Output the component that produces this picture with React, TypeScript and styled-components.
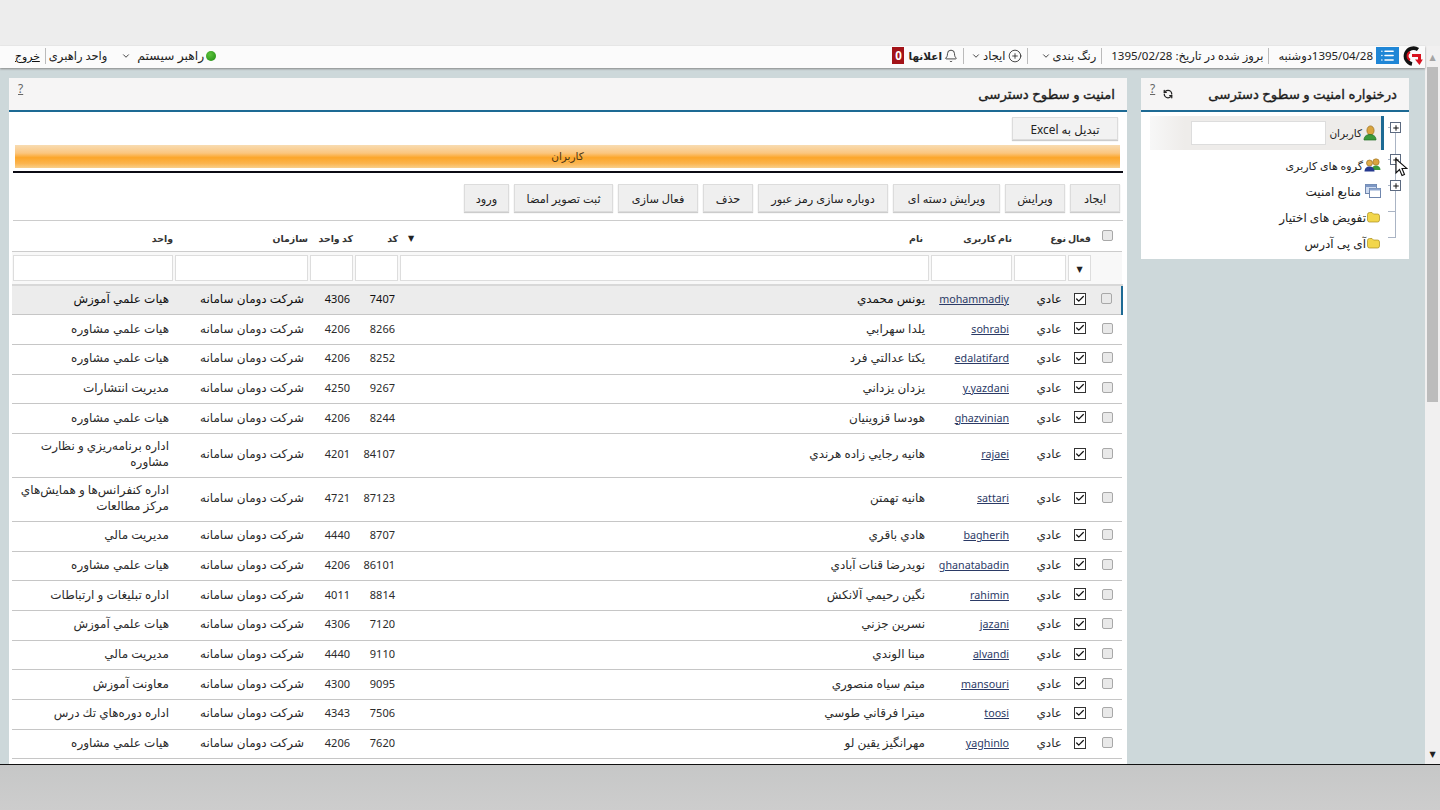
import React from 'react';
import styled, { createGlobalStyle } from 'styled-components';
import { Bell, Check, ChevronDown, CirclePlus, List, Plus, RefreshCcw } from 'lucide-react';

const GlobalStyle = createGlobalStyle`
    html, body {
        margin: 0;
        padding: 0;
        height: 100%;
        overflow: hidden;
    }
    body {
        font-family: 'Noto Sans', 'DejaVu Sans', sans-serif;
        font-size: 11px;
        color: #222;
    }
`;

const Page = styled.div`
    width: 1440px;
    height: 810px;
    display: flex;
    flex-direction: column;
    overflow: hidden;
    position: relative;
`;

const TopChrome = styled.div`
    height: 46px;
    flex: none;
    background: #ededed;
`;

const BottomChrome = styled.div`
    flex: 1;
    background: linear-gradient(#c6c7c7, #cdcdcd);
    border-top: 1px solid #111;
`;

const Browser = styled.div`
    height: 718px;
    flex: none;
    display: flex;
    background: #cdd8da;
`;

const Main = styled.div`
    width: 1425px;
    display: flex;
    flex-direction: column;
    min-height: 0;
`;

const ScrollBar = styled.div`
    width: 15px;
    background: #f1f0f0;
    display: flex;
    flex-direction: column;
    align-items: center;
    justify-content: space-between;
    font-size: 8px;
    color: #999;
`;

const ScrollArrow = styled.span<{ $dark?: boolean }>`
    height: 21px;
    line-height: 21px;
    color: ${({ $dark }) => ($dark ? '#222' : '#a4a4a4')};
`;

const ScrollThumb = styled.div`
    width: 11px;
    height: 335px;
    background: #bcbcbc;
    margin-bottom: auto;
`;

const TopBar = styled.div`
    height: 22px;
    box-sizing: border-box;
    flex: none;
    background: #fbfbfb;
    box-shadow: 0 1px 2px #888;
    display: flex;
    align-items: center;
    justify-content: space-between;
    padding: 0 2px 3px 15px;
    position: relative;
    font-size: 11.5px;
`;

const BarGroup = styled.div`
    display: flex;
    align-items: center;
    gap: 6px;
`;

const Sep = styled.span`
    width: 1px;
    height: 16px;
    background: #bbb;
    margin: 0 3px 0 -1px;
`;

const ListButton = styled.span`
    width: 23px;
    height: 17px;
    background: #1f86d6;
    color: #fff;
    display: flex;
    align-items: center;
    justify-content: center;
    margin: 0 -3px;
`;

const BarItem = styled.span<{ $after?: number; $gap?: number; $size?: number }>`
    display: inline-flex;
    align-items: center;
    gap: ${({ $gap }) => $gap || 2}px;
    white-space: nowrap;
    margin-left: ${({ $after }) => $after || 0}px;
    font-size: ${({ $size }) => $size || 11.5}px;
`;

const BoldLabel = styled.b`
    font-size: 10.5px;
`;

const Badge = styled.span`
    background: #a31318;
    color: #fff;
    font-weight: 700;
    width: 12px;
    height: 17px;
    line-height: 17px;
    text-align: center;
    margin-right: 2px;
`;

const Dot = styled.span`
    width: 10px;
    height: 10px;
    border-radius: 50%;
    background: radial-gradient(circle at 40% 35%, #5cc23c, #1f8a12);
    margin-left: -4px;
`;

const Logout = styled.span`
    font-size: 10.8px;
    text-decoration: underline;
    color: #111;
`;

const Content = styled.div`
    flex: 1;
    min-height: 0;
    display: flex;
    align-items: flex-start;
    gap: 14px;
    padding: 10px 16px 0 9px;
    overflow: hidden;
`;

const TreePanel = styled.section`
    width: 268px;
    flex: none;
    background: #fff;
    padding-bottom: 5px;
    position: relative;
`;

const GridPanel = styled.section`
    width: 1118px;
    flex: none;
    height: 700px;
    background: #fff;
    overflow: hidden;
`;

const PanelHead = styled.header`
    height: 32px;
    background: #f6f5f5;
    border-bottom: 2px solid #1d6a94;
    display: flex;
    align-items: center;
    justify-content: space-between;
    padding: 0 12px 0 9px;
`;

const PanelTitle = styled.h2`
    margin: 0;
    font-size: 13.3px;
    font-weight: 400;
    -webkit-text-stroke: 0.35px #1c1c1c;
    color: #1c1c1c;
`;

const HeadTools = styled.div`
    display: flex;
    align-items: center;
    gap: 8px;
    color: #222;
`;

const Help = styled.span`
    font-size: 12px;
    color: #666;
    text-decoration: underline;
    margin-top: -11px;
`;

const ExcelRow = styled.div`
    display: flex;
    padding: 5px 9px 0 0;
`;

const Button = styled.button<{ $w: number }>`
    height: 28px;
    padding: 0;
    width: ${({ $w }) => $w}px;
    font: inherit;
    font-size: 11.3px;
    color: #222;
    background: #efefef;
    border: 1px solid #dcdcdc;
    box-shadow: 0 1px 1px #ccc;
    white-space: nowrap;
`;

const ExcelButton = styled(Button)`
    height: 23px;
    font-size: 11.8px;
    background: #f2f2f2;
`;

const OrangeBar = styled.div`
    margin: 5px 7px 0 6px;
    height: 23px;
    line-height: 23px;
    text-align: center;
    font-size: 10.5px;
    color: #4a3413;
    background: linear-gradient(#f8dcb2 0%, #fbc67f 35%, #fca62a 55%, #fbb44e 80%, #f9cf8c 100%);
`;

const BlackRule = styled.div`
    margin: 3px 4px 0;
    height: 2px;
    background: #0b0b14;
`;

const Toolbar = styled.div`
    display: flex;
    gap: 5px;
    padding: 11px 3px 8px 0;
    margin: 0 4px;
    border-bottom: 1px solid #ccc;
`;

const Table = styled.table`
    width: 1110px;
    margin: 1px 4px 0;
    border-collapse: collapse;
    table-layout: fixed;
    font-size: 12px;
`;

const HeadCell = styled.th`
    height: 25px;
    padding: 4px 1px 0 5px;
    text-align: right;
    font-size: 9.4px;
    font-weight: 700;
    color: #333;
    border-bottom: 1px solid #ccc;
    white-space: nowrap;
`;

const HeadCheckCell = styled(HeadCell)`
    padding: 0;
`;

const NameHead = styled.div`
    display: flex;
    justify-content: space-between;
    padding: 0 6px 0 4px;
`;

const SortArrow = styled.span`
    font-size: 8px;
    color: #222;
`;

const FilterCell = styled.td`
    height: 32px;
    padding: 0 1px;
    background: #f8f8f8;
    border-bottom: 2px solid #d8d8d8;
`;

const FilterInput = styled.div`
    height: 26px;
    box-sizing: border-box;
    background: #fff;
    border: 1px solid #ddd;
`;

const SelectBox = styled(FilterInput)`
    display: flex;
    align-items: center;
    justify-content: center;
    font-size: 8px;
    color: #222;
`;

const Row = styled.tr<{ $selected?: boolean; $tall?: boolean }>`
    height: ${({ $tall }) => ($tall ? 44 : 29.7)}px;
    background: ${({ $selected }) => ($selected ? '#ececec' : '#fff')};
    border-bottom: 1px solid #c6c6c6;
    color: ${({ $selected }) => ($selected ? '#111' : '#2b2b2b')};
`;

const Cell = styled.td`
    padding: 0 5px 2px;
    text-align: right;
    line-height: 16px;
`;

const NumCell = styled(Cell)`
    font-size: 11px;
    direction: ltr;
    padding-right: 4px;
`;

const CheckCell = styled.td<{ $marked?: boolean }>`
    padding: 0;
    border-right: ${({ $marked }) => ($marked ? '2px solid #1d6a94' : '0')};
`;

const RowBox = styled.span`
    display: block;
    box-sizing: border-box;
    width: 11px;
    height: 11px;
    margin: 0 auto 3px;
    border: 1px solid #a8a8a8;
    border-radius: 2px;
    background: #e9e9e9;
`;

const ActiveBox = styled.span`
    display: flex;
    box-sizing: border-box;
    align-items: center;
    justify-content: center;
    width: 12px;
    height: 12px;
    margin: 0 auto 3px;
    border: 1px solid #333;
    background: #fff;
    color: #111;
`;

const UserLink = styled.span`
    color: #2b3a66;
    font-size: 10.7px;
    text-decoration: underline;
    direction: ltr;
    display: inline-block;
    margin-right: -1px;
`;

const Tree = styled.div`
    padding-top: 4px;
`;

const TreeRow = styled.div<{ $h: number }>`
    height: ${({ $h }) => $h}px;
    display: flex;
    align-items: center;
`;

const Branch = styled.div<{ $first?: boolean; $last?: boolean }>`
    width: 25px;
    align-self: stretch;
    flex: none;
    position: relative;
    &::before {
        content: '';
        position: absolute;
        right: 13px;
        width: 1px;
        top: ${({ $first }) => ($first ? '10px' : '0')};
        bottom: ${({ $last }) => ($last ? '16px' : '0')};
        background: #aab4c4;
    }
    &::after {
        content: '';
        position: absolute;
        right: 13px;
        width: 8px;
        height: 1px;
        top: calc(50% - 6px);
        background: #aab4c4;
    }
`;

const Expander = styled.span`
    position: absolute;
    right: 8px;
    top: calc(50% - 11px);
    width: 9px;
    height: 9px;
    background: #fff;
    border: 1px solid #5c6a80;
    display: flex;
    align-items: center;
    justify-content: center;
    z-index: 1;
    color: #111;
`;

const SelectedNode = styled.div`
    width: 234px;
    align-self: stretch;
    border-right: 3px solid #1d6a94;
    background: linear-gradient(to left, #eeecea 85%, #f7f7f7);
    display: flex;
    align-items: center;
    padding-right: 4px;
    box-sizing: border-box;
    gap: 1px;
    font-size: 10.5px;
`;

const Node = styled.div<{ $pad: number; $size?: number }>`
    display: flex;
    align-items: center;
    gap: 1px;
    padding-right: ${({ $pad }) => $pad}px;
    font-size: ${({ $size }) => $size || 11}px;
`;

const TreeInput = styled.div`
    width: 135px;
    height: 24px;
    box-sizing: border-box;
    background: #fff;
    border: 1px solid #ddd;
    margin-right: 2px;
`;

const Cursor = styled.svg`
    position: absolute;
    left: 254px;
    top: 80px;
    z-index: 2;
`;

const Logo = () => (
    <svg width="21" height="20" viewBox="0 0 21 20" fill="none">
        <path d="M16 3.500A8 8 0 1 0 10 18" stroke="#111" strokeWidth="3.800" />
        <path d="M8 6A4.500 4.500 0 0 0 8 14" stroke="#d8121f" strokeWidth="2" />
        <path d="M10 9.500H17.500V14" stroke="#d8121f" strokeWidth="3" />
        <path d="M13 13.500L17.500 19L20.800 13.500Z" fill="#d8121f" />
    </svg>
);

const UserIcon = () => (
    <svg width="14" height="17" viewBox="0 0 14 17">
        <ellipse cx="7.500" cy="5.500" rx="3.600" ry="4.600" fill="#d9a43e" stroke="#9b6f1e" strokeWidth=".7" />
        <path d="M1 15c0-4 3-5.500 6-5.500s6 1.500 6 5.500z" fill="#3b9a3b" stroke="#1f6d23" strokeWidth=".7" />
    </svg>
);

const GroupIcon = () => (
    <svg width="17" height="14" viewBox="0 0 17 14">
        <circle cx="12" cy="4" r="3.200" fill="#d9a43e" stroke="#9b6f1e" strokeWidth=".6" />
        <path d="M7.500 12c0-3 2-4.500 4.500-4.500s4.500 1.500 4.500 4.500z" fill="#3b9a3b" />
        <circle cx="5.500" cy="5" r="3" fill="#e0ad4a" stroke="#8a6319" strokeWidth=".6" />
        <path d="M.5 13.500c0-3 2-5 5-5s5 2 5 5z" fill="#25398f" />
    </svg>
);

const WindowsIcon = () => (
    <svg width="16" height="14" viewBox="0 0 16 14">
        <rect x=".5" y=".5" width="11" height="9" fill="#cfdcf0" stroke="#6f86ad" />
        <rect x=".5" y=".5" width="11" height="2.500" fill="#7d97c4" />
        <rect x="4.500" y="4.500" width="11" height="9" fill="#fff" stroke="#6f86ad" />
        <rect x="4.500" y="4.500" width="11" height="2" fill="#8ca5cf" />
    </svg>
);

const FolderIcon = () => (
    <svg width="13" height="11" viewBox="0 0 13 11">
        <path d="M.5 2.500q0-2 2-2h2.500l1.500 1.500h4q2 0 2 2v4q0 2-2 2h-8q-2 0-2-2z" fill="#f2d64b" stroke="#a98e1d" strokeWidth=".7" />
    </svg>
);

const CO = 'شركت دومان سامانه';
const ADVICE = 'هيات علمي مشاوره';
const EDU = 'هيات علمي آموزش';
const FIN = 'مديريت مالي';

const users = [
    { login: 'mohammadiy', name: 'يونس محمدي', code: '7407', unit: '4306', dept: EDU },
    { login: 'sohrabi', name: 'يلدا سهرابي', code: '8266', unit: '4206', dept: ADVICE },
    { login: 'edalatifard', name: 'يكتا عدالتي فرد', code: '8252', unit: '4206', dept: ADVICE },
    { login: 'y.yazdani', name: 'يزدان يزداني', code: '9267', unit: '4250', dept: 'مديريت انتشارات' },
    { login: 'ghazvinian', name: 'هودسا قزوينيان', code: '8244', unit: '4206', dept: ADVICE },
    { login: 'rajaei', name: 'هانيه رجايي زاده هرندي', code: '84107', unit: '4201', dept: 'اداره برنامه‌ريزي و نظارت مشاوره', tall: true },
    { login: 'sattari', name: 'هانيه تهمتن', code: '87123', unit: '4721', dept: 'اداره كنفرانس‌ها و همايش‌هاي مركز مطالعات', tall: true },
    { login: 'bagherih', name: 'هادي باقري', code: '8707', unit: '4440', dept: FIN },
    { login: 'ghanatabadin', name: 'نويدرضا قنات آبادي', code: '86101', unit: '4206', dept: ADVICE },
    { login: 'rahimin', name: 'نگين رحيمي آلانكش', code: '8814', unit: '4011', dept: 'اداره تبليغات و ارتباطات' },
    { login: 'jazani', name: 'نسرين جزني', code: '7120', unit: '4306', dept: EDU },
    { login: 'alvandi', name: 'مينا الوندي', code: '9110', unit: '4440', dept: FIN },
    { login: 'mansouri', name: 'ميثم سياه منصوري', code: '9095', unit: '4300', dept: 'معاونت آموزش' },
    { login: 'toosi', name: 'ميترا فرقاني طوسي', code: '7506', unit: '4343', dept: 'اداره دوره‌هاي تك درس' },
    { login: 'yaghinlo', name: 'مهرانگيز يقين لو', code: '7620', unit: '4206', dept: ADVICE },
];

const colWidths = [30, 25, 54, 83, 531, 45, 45, 135, 162];

const actions: [string, number][] = [
    ['ایجاد', 50],
    ['ویرایش', 60],
    ['ویرایش دسته ای', 107],
    ['دوباره سازی رمز عبور', 130],
    ['حذف', 50],
    ['فعال سازی', 80],
    ['ثبت تصویر امضا', 99],
    ['ورود', 45],
];

const App = () => (
    <Page>
        <GlobalStyle />
        <TopChrome />
        <Browser>
            <Main dir="rtl">
                <TopBar>
                    <BarGroup>
                        <Logo />
                        <ListButton>
                            <List size={15} strokeWidth={2.4} />
                        </ListButton>
                        <BarItem>1395/04/28دوشنبه</BarItem>
                        <Sep />
                        <BarItem>بروز شده در تاریخ: 1395/02/28</BarItem>
                        <Sep />
                        <BarItem $after={4}>
                            رنگ بندی <ChevronDown size={10} />
                        </BarItem>
                        <Sep />
                        <BarItem $after={-2}>
                            <CirclePlus size={14} strokeWidth={1.4} />
                            ایجاد
                            <ChevronDown size={10} />
                        </BarItem>
                        <Sep />
                        <BarItem>
                            <Bell size={14} strokeWidth={1.4} />
                            <BoldLabel>اعلانها</BoldLabel>
                            <Badge>0</Badge>
                        </BarItem>
                    </BarGroup>
                    <BarGroup>
                        <Dot />
                        <BarItem $after={8} $gap={6} $size={12.4}>
                            راهبر سیستم
                            <ChevronDown size={10} />
                        </BarItem>
                        <BarItem $after={-6}>واحد راهبری</BarItem>
                        <Sep />
                        <Logout>خروج</Logout>
                    </BarGroup>
                </TopBar>
                <Content>
                    <TreePanel>
                        <PanelHead>
                            <PanelTitle>درخنواره امنیت و سطوح دسترسی</PanelTitle>
                            <HeadTools>
                                <RefreshCcw size={10} strokeWidth={3} />
                                <Help>?</Help>
                            </HeadTools>
                        </PanelHead>
                        <Tree>
                            <TreeRow $h={34}>
                                <Branch $first>
                                    <Expander>
                                        <Plus size={8} strokeWidth={3} />
                                    </Expander>
                                </Branch>
                                <SelectedNode>
                                    <UserIcon />
                                    <span>کاربران</span>
                                    <TreeInput />
                                </SelectedNode>
                            </TreeRow>
                            <TreeRow $h={30}>
                                <Branch>
                                    <Expander>
                                        <Plus size={8} strokeWidth={3} />
                                    </Expander>
                                </Branch>
                                <Node $pad={3}>
                                    <GroupIcon />
                                    <span>گروه های کاربری</span>
                                </Node>
                            </TreeRow>
                            <TreeRow $h={22}>
                                <Branch>
                                    <Expander>
                                        <Plus size={8} strokeWidth={3} />
                                    </Expander>
                                </Branch>
                                <Node $pad={3} $size={12}>
                                    <WindowsIcon />
                                    <span>&nbsp;منابع امنیت</span>
                                </Node>
                            </TreeRow>
                            <TreeRow $h={30}>
                                <Branch />
                                <Node $pad={4} $size={12}>
                                    <FolderIcon />
                                    <span>تفویض های اختیار</span>
                                </Node>
                            </TreeRow>
                            <TreeRow $h={22}>
                                <Branch $last />
                                <Node $pad={4} $size={12}>
                                    <FolderIcon />
                                    <span>آی پی آدرس</span>
                                </Node>
                            </TreeRow>
                        </Tree>
                        <Cursor width="13" height="19" viewBox="0 0 13 19">
                            <path d="M1 1V15L4.500 11.500L7 17.500L9.500 16.500L7 10.500H12Z" fill="#fff" stroke="#111" strokeWidth="1.100" />
                        </Cursor>
                    </TreePanel>
                    <GridPanel>
                        <PanelHead>
                            <PanelTitle>امنیت و سطوح دسترسی</PanelTitle>
                            <HeadTools>
                                <Help>?</Help>
                            </HeadTools>
                        </PanelHead>
                        <ExcelRow>
                            <ExcelButton $w={106}>تبدیل به Excel</ExcelButton>
                        </ExcelRow>
                        <OrangeBar>کاربران</OrangeBar>
                        <BlackRule />
                        <Toolbar>
                            {actions.map(([label, w]) => (
                                <Button key={label} $w={w}>
                                    {label}
                                </Button>
                            ))}
                        </Toolbar>
                        <Table>
                            <colgroup>
                                {colWidths.map((w, idx) => (
                                    <col key={idx} width={w} />
                                ))}
                            </colgroup>
                            <thead>
                                <tr>
                                    <HeadCheckCell>
                                        <RowBox />
                                    </HeadCheckCell>
                                    <HeadCell>فعال</HeadCell>
                                    <HeadCell>نوع</HeadCell>
                                    <HeadCell>نام کاربری</HeadCell>
                                    <HeadCell>
                                        <NameHead>
                                            <span>نام</span>
                                            <SortArrow>▼</SortArrow>
                                        </NameHead>
                                    </HeadCell>
                                    <HeadCell>کد</HeadCell>
                                    <HeadCell>کد واحد</HeadCell>
                                    <HeadCell>سازمان</HeadCell>
                                    <HeadCell>واحد</HeadCell>
                                </tr>
                                <tr>
                                    <FilterCell />
                                    <FilterCell>
                                        <SelectBox>▼</SelectBox>
                                    </FilterCell>
                                    {colWidths.slice(2).map((w, idx) => (
                                        <FilterCell key={idx}>
                                            <FilterInput />
                                        </FilterCell>
                                    ))}
                                </tr>
                            </thead>
                            <tbody>
                                {users.map((user, idx) => (
                                    <Row key={user.login} $selected={idx === 0} $tall={user.tall}>
                                        <CheckCell $marked={idx === 0}>
                                            <RowBox />
                                        </CheckCell>
                                        <CheckCell>
                                            <ActiveBox>
                                                <Check size={10} strokeWidth={3} />
                                            </ActiveBox>
                                        </CheckCell>
                                        <Cell>عادي</Cell>
                                        <Cell>
                                            <UserLink>{user.login}</UserLink>
                                        </Cell>
                                        <Cell>{user.name}</Cell>
                                        <NumCell>{user.code}</NumCell>
                                        <NumCell>{user.unit}</NumCell>
                                        <Cell>{CO}</Cell>
                                        <Cell>{user.dept}</Cell>
                                    </Row>
                                ))}
                            </tbody>
                        </Table>
                    </GridPanel>
                </Content>
            </Main>
            <ScrollBar>
                <ScrollArrow>▲</ScrollArrow>
                <ScrollThumb />
                <ScrollArrow $dark>▼</ScrollArrow>
            </ScrollBar>
        </Browser>
        <BottomChrome />
    </Page>
);

export default App;
